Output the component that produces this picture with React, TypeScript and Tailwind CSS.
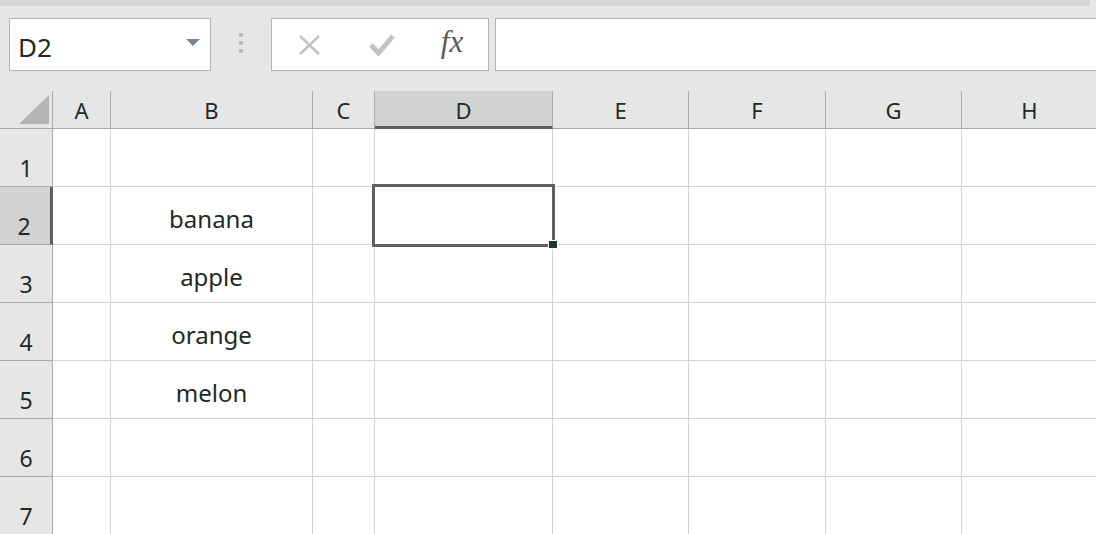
import React from 'react';

const font = { fontFamily: '"Noto Sans", "Noto Sans CJK JP", sans-serif' };

const columns = [
  { key: 'A', w: 'w-[58px]' },
  { key: 'B', w: 'w-[202px]' },
  { key: 'C', w: 'w-[62px]' },
  { key: 'D', w: 'w-[178px]' },
  { key: 'E', w: 'w-[136px]' },
  { key: 'F', w: 'w-[137px]' },
  { key: 'G', w: 'w-[136px]' },
  { key: 'H', w: 'w-[136px]' },
];

const data: Record<string, string> = {
  B2: 'banana',
  B3: 'apple',
  B4: 'orange',
  B5: 'melon',
};

function Toolbar() {
  return (
    <div className="bg-[#e6e6e6] h-[91px] flex flex-col">
      <div className="h-[6px] bg-[#d5d5d5] mr-[6px]" />
      <div className="flex items-start pt-[12px] pl-[9px]">
        {/* Name box */}
        <div className="w-[202px] h-[53px] bg-white border border-[#b4b4b4] flex items-center justify-between pl-[8px] pr-[10px]">
          <span className="text-[26px] text-[#1e2a26] pt-[5px]">D2</span>
          <svg width="14" height="7" viewBox="0 0 14 7" className="mb-[4px]">
            <polygon points="0,0 14,0 7,7" fill="#7a8594" />
          </svg>
        </div>
        {/* Grip */}
        <div className="w-[60px] flex justify-center pt-[15px]">
          <div className="flex flex-col gap-[4px]">
            <div className="w-[4px] h-[4px] bg-[#bdbdbd]" />
            <div className="w-[4px] h-[4px] bg-[#bdbdbd]" />
            <div className="w-[4px] h-[4px] bg-[#bdbdbd]" />
          </div>
        </div>
        {/* Cancel / enter / fx */}
        <div className="w-[218px] h-[53px] bg-white border border-[#b4b4b4] flex items-center">
          <div className="w-[74px] flex justify-center pl-[1px]">
            <svg width="23" height="20" viewBox="0 0 23 20">
              <path d="M2 1 L21 19 M21 1 L2 19" stroke="#c3c3c3" strokeWidth="2.6" />
            </svg>
          </div>
          <div className="w-[72px] flex justify-center">
            <svg width="26" height="22" viewBox="0 0 26 22">
              <path d="M2 11 L9.5 19 L24 2" stroke="#c3c3c3" strokeWidth="5" fill="none" />
            </svg>
          </div>
          <div
            className="w-[66px] flex justify-center text-[31px] italic text-[#595959] pb-[4px] pl-[2px]"
            style={{ fontFamily: '"Liberation Serif", serif' }}
          >
            fx
          </div>
        </div>
        {/* Formula bar */}
        <div className="ml-[6px] flex-1 h-[53px] bg-white border-y border-l border-[#b4b4b4]" />
      </div>
    </div>
  );
}

function HeaderRow() {
  return (
    <div className="flex h-[38px] bg-[#e6e6e6]">
      <div className="w-[53px] shrink-0 border-r border-b border-[#ababab] relative">
        <svg width="53" height="37" viewBox="0 0 53 37" className="absolute inset-0">
          <polygon points="19,33 49,33 49,4" fill="#b4b4b4" />
        </svg>
      </div>
      {columns.map((c) => {
        const sel = c.key === 'D';
        return (
          <div
            key={c.key}
            className={`${c.w} shrink-0 border-r border-[#ababab] flex items-end justify-center text-[22px] text-[#1e2a26] leading-none ${
              sel ? 'bg-[#d2d2d2] border-b-[3px] border-b-[#5f5f5f] pb-[5px]' : 'border-b pb-[7px]'
            }`}
          >
            {c.key}
          </div>
        );
      })}
    </div>
  );
}

function Row({ n }: { n: number }) {
  const sel = n === 2;
  return (
    <div className="flex h-[58px]">
      <div
        className={`w-[53px] shrink-0 border-b border-[#ababab] flex items-end justify-center text-[23px] text-[#1e2a26] leading-none pb-[6px] ${
          sel ? 'bg-[#d2d2d2] border-r-[3px] border-r-[#5f5f5f] pr-[2px]' : 'bg-[#e6e6e6] border-r'
        }`}
      >
        {n}
      </div>
      {columns.map((c) => (
        <div
          key={c.key}
          className={`${c.w} shrink-0 border-r border-b border-[#d4d4d4] flex items-end justify-center text-[24px] text-[#1e2a26] leading-none pb-[13px]`}
        >
          {data[`${c.key}${n}`] ?? ''}
        </div>
      ))}
    </div>
  );
}

export default function App() {
  return (
    <div className="w-[1096px] h-[534px] overflow-hidden bg-white" style={font}>
      <Toolbar />
      <div className="relative">
        <HeaderRow />
        {[1, 2, 3, 4, 5, 6, 7].map((n) => (
          <Row key={n} n={n} />
        ))}
        {/* Active cell D2 */}
        <div className="absolute left-[372px] top-[93px] w-[183px] h-[63px] border-[3px] border-[#5f5f5f] pointer-events-none">
          <div className="absolute right-[-6px] bottom-[-5px] w-[10px] h-[9px] bg-[#1e3a2f] border border-white" />
        </div>
      </div>
    </div>
  );
}
